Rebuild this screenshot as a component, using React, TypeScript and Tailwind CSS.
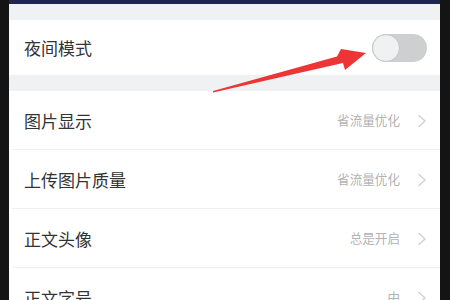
import React from "react";

const font = { fontFamily: '"Noto Sans CJK SC", "Noto Sans", sans-serif' };

function Chevron() {
  return (
    <svg width="10" height="14" viewBox="0 0 10 14" className="shrink-0">
      <path d="M2 1.5 L8 7 L2 12.5" fill="none" stroke="#cfcfcf" strokeWidth="1.3" strokeLinecap="round" strokeLinejoin="round" />
    </svg>
  );
}

function Row({ label, value, last }: { label: string; value: string; last?: boolean }) {
  return (
    <div className="relative flex h-[59px] shrink-0 items-center pl-[15px] pr-[13px]">
      <span className="flex-1 text-[17px] text-[#333333]">{label}</span>
      <span className="text-[12.6px] text-[#b3b3b3]">{value}</span>
      <span className="ml-[17px] flex items-center">
        <Chevron />
      </span>
      {!last && <div className="absolute bottom-0 left-[3px] right-0 h-px bg-[#efefef]" />}
    </div>
  );
}

export default function App() {
  return (
    <div className="relative flex h-[300px] w-[450px] items-start overflow-hidden bg-[#141414]" style={font}>
      <div className="h-[300px] w-[9px] shrink-0 bg-[#141414]" />
      <div className="flex h-[300px] w-[431px] shrink-0 flex-col overflow-hidden bg-[#f0f1f3]">
        <div className="h-[4px] shrink-0 bg-[#1e2550]" />
        <div className="h-[16px] shrink-0" />
        <div className="flex h-[55px] shrink-0 items-center justify-between bg-white pl-[15px] pr-[13px]">
          <span className="text-[17px] text-[#333333]">夜间模式</span>
          <div className="relative h-[28px] w-[55px] rounded-full bg-[#cdcfd1]">
            <div className="absolute left-0 top-0 h-[28px] w-[28px] rounded-full border border-[#c3c5c8] bg-[#eff1f3]" />
          </div>
        </div>
        <div className="h-[16px] shrink-0" />
        <div className="flex shrink-0 flex-col bg-white">
          <Row label="图片显示" value="省流量优化" />
          <Row label="上传图片质量" value="省流量优化" />
          <Row label="正文头像" value="总是开启" />
          <Row label="正文字号" value="中" last />
        </div>
      </div>
      <div className="h-[300px] w-[10px] shrink-0 bg-[#141414]" />
      <svg className="pointer-events-none absolute left-0 top-0" width="450" height="300" viewBox="0 0 450 300">
        <polygon
          points="213,91 337,56.5 341,49 366,53 345,70 343,63 213,92.5"
          fill="#ee3535"
        />
      </svg>
    </div>
  );
}
